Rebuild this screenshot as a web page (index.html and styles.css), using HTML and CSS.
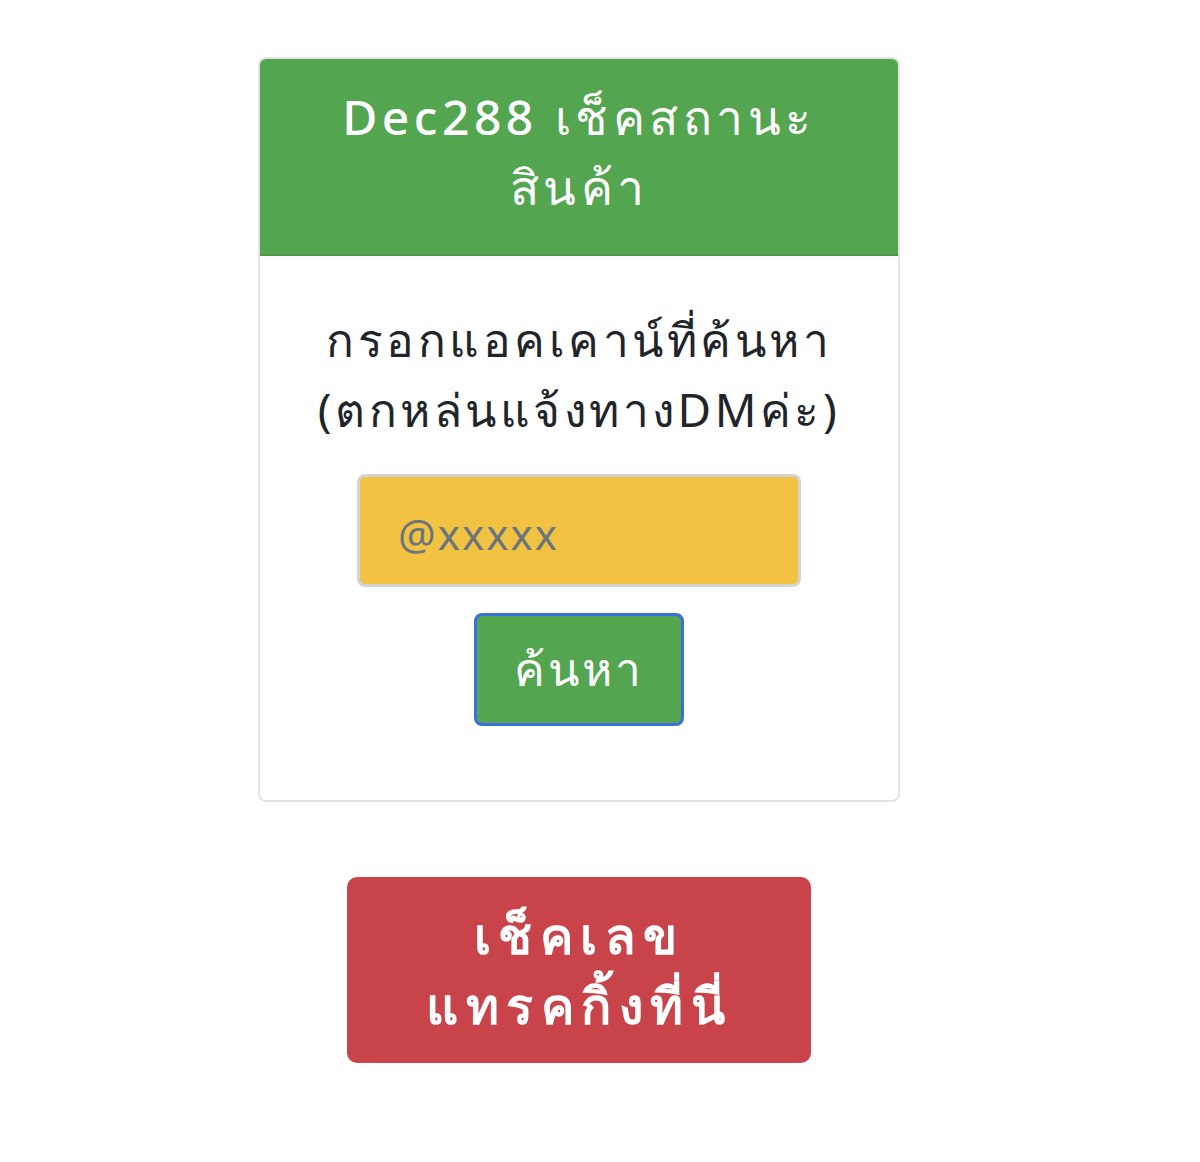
FILE: index.html
```html
<!DOCTYPE html>
<html lang="th">
<head>
    <meta charset="UTF-8">
    <meta name="viewport" content="width=device-width, initial-scale=1.0">
    <title>Dec288 เช็คสถานะสินค้า</title>
    <link rel="stylesheet" href="styles.css">
</head>
<body>
    <div class="page">
        <div class="card">
            <div class="card-header">
                Dec288 เช็คสถานะ<br>สินค้า
            </div>
            <div class="card-body">
                <p class="hint">กรอกแอคเคาน์ที่ค้นหา<br>(ตกหล่นแจ้งทางDMค่ะ)</p>
                <input type="text" class="account-input" placeholder="@xxxxx">
                <button class="search-btn">ค้นหา</button>
            </div>
        </div>

        <a class="tracking-btn" href="#">เช็คเลข<br>แทรคกิ้งที่นี่</a>
    </div>
</body>
</html>
```

FILE: styles.css
```css
body {
    margin: 0;
    background-color: #fff;
    font-family: "Noto Sans", "DejaVu Sans", sans-serif;
    color: #212529;
}

.page {
    width: 1158px;
    padding-top: 57px;
    display: flex;
    flex-direction: column;
    align-items: center;
}

.card {
    width: 642px;
    box-sizing: border-box;
    border: 2px solid #e3e3e3;
    border-radius: 8px;
    overflow: hidden;
    background-color: #fff;
}

.card-header {
    background-color: #53a550;
    color: #fff;
    text-align: center;
    font-size: 48px;
    font-weight: 500;
    line-height: 70px;
    letter-spacing: 4.5px;
    padding: 23px 10px 32px;
    border-bottom: 2px solid #4a9646;
}

.card-body {
    display: flex;
    flex-direction: column;
    align-items: center;
    padding: 48px 10px 74px;
}

.hint {
    margin: 0 0 30px;
    text-align: center;
    font-size: 46px;
    line-height: 70px;
    letter-spacing: 3.5px;
}

.account-input {
    width: 444px;
    height: 113px;
    box-sizing: border-box;
    background-color: #f2c342;
    border: 3px solid #d3d3d3;
    border-radius: 8px;
    padding: 6px 38px 0;
    font-family: inherit;
    font-size: 42px;
    letter-spacing: 2px;
    color: #495057;
    outline: none;
}

.account-input::placeholder {
    color: #6c757d;
}

.search-btn {
    margin-top: 26px;
    width: 210px;
    height: 113px;
    box-sizing: border-box;
    background-color: #53a550;
    border: 3px solid #3a6fe0;
    border-radius: 8px;
    color: #fff;
    font-family: inherit;
    font-size: 46px;
    letter-spacing: 3px;
    cursor: pointer;
}

.tracking-btn {
    margin-top: 75px;
    width: 464px;
    height: 186px;
    box-sizing: border-box;
    background-color: #c9434a;
    border-radius: 10px;
    color: #fff;
    text-decoration: none;
    text-align: center;
    font-size: 50px;
    font-weight: bold;
    line-height: 70px;
    letter-spacing: 7.5px;
    display: flex;
    align-items: center;
    justify-content: center;
}
```
